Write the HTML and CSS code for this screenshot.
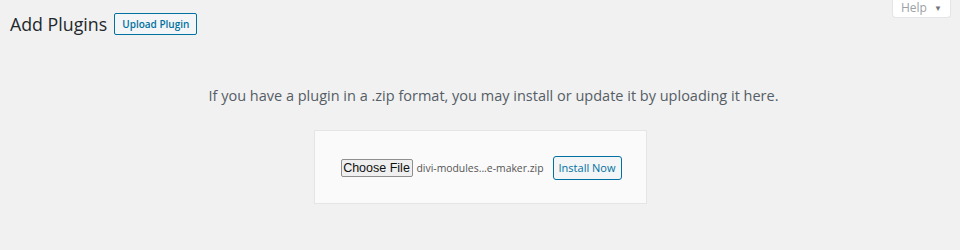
FILE: index.html
```html
<!DOCTYPE html>
<html lang="en">
<head>
    <meta charset="UTF-8">
    <title>Add Plugins</title>
    <link rel="stylesheet" href="styles.css">
</head>
<body>
    <!-- Top bar with title and help tab -->
    <div class="top-bar">
        <div class="title-group">
            <h1>Add Plugins</h1>
            <a class="title-action" href="#">Upload Plugin</a>
        </div>
        <a class="help-tab" href="#">Help <span class="arrow">&#9660;</span></a>
    </div>

    <!-- Upload area -->
    <div class="upload-plugin">
        <p class="install-help">If you have a plugin in a .zip format, you may install or update it by uploading it here.</p>
        <form class="upload-form">
            <button type="button" class="choose-btn">Choose File</button>
            <span class="file-name">divi-modules...e-maker.zip</span>
            <button type="button" class="install-btn">Install Now</button>
        </form>
    </div>
</body>
</html>
```

FILE: styles.css
```css
/* General */
body {
    margin: 0;
    background: #f1f1f1;
    font-family: "Open Sans", sans-serif;
    color: #444;
}

/* Title bar */
.top-bar {
    display: flex;
    justify-content: space-between;
    align-items: flex-start;
    padding: 0 9px 0 10px;
}

.title-group {
    display: flex;
    align-items: center;
    padding-top: 11px;
}

h1 {
    margin: 0;
    font-size: 17.8px;
    font-weight: 400;
    color: #23282d;
    line-height: 26px;
}

.title-action {
    margin-left: 7px;
    padding: 4px 7px;
    border: 1px solid #0071a1;
    border-radius: 2px;
    background: #f3f5f6;
    color: #0071a1;
    font-size: 10px;
    font-weight: 600;
    text-decoration: none;
    line-height: 12px;
}

.help-tab {
    display: block;
    width: 59px;
    height: 18px;
    box-sizing: border-box;
    background: #fff;
    border: 1px solid #e2e4e7;
    border-top: none;
    border-radius: 0 0 4px 4px;
    color: #9ba1a6;
    font-size: 12px;
    line-height: 16px;
    text-align: center;
    text-decoration: none;
}

.help-tab .arrow {
    font-size: 8px;
    color: #72777c;
    margin-left: 4px;
    vertical-align: 1px;
}

/* Upload box */
.upload-plugin {
    text-align: center;
}

.install-help {
    margin: 49px 0 24px;
    padding-left: 27px;
    font-size: 14.5px;
    color: #555d66;
    line-height: 20px;
}

.upload-form {
    display: inline-flex;
    align-items: center;
    width: 333px;
    height: 74px;
    box-sizing: border-box;
    padding: 1px 24px 0 26px;
    background: #fafafa;
    border: 1px solid #e5e5e5;
}

.choose-btn {
    width: 72px;
    height: 18px;
    padding: 0;
    background: #efefef;
    border: 1px solid #8f8f8f;
    border-radius: 2px;
    font-family: "Liberation Sans", Arial, sans-serif;
    font-size: 12.5px;
    color: #111;
}

.file-name {
    margin-left: 4px;
    font-size: 10.4px;
    color: #555;
    white-space: nowrap;
}

.install-btn {
    margin-left: auto;
    width: 69px;
    height: 24px;
    padding: 0;
    background: #f3f5f6;
    border: 1px solid #0071a1;
    border-radius: 3px;
    color: #0071a1;
    font-family: "Open Sans", sans-serif;
    font-size: 11px;
}
```
